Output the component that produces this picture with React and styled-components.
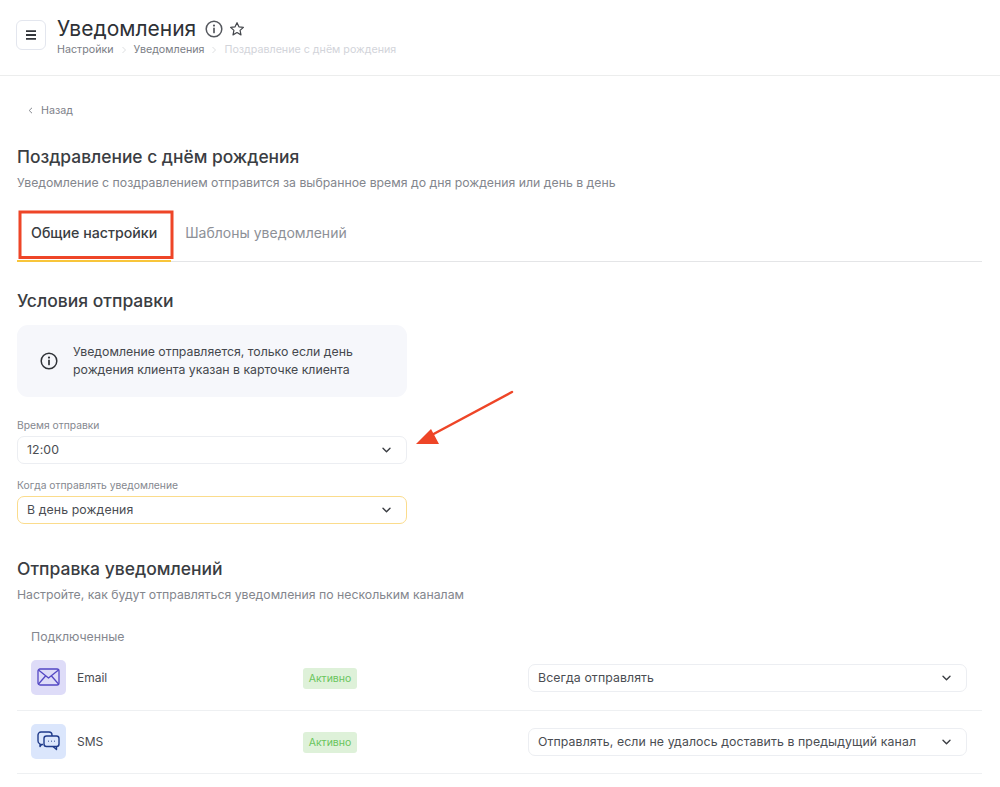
import React from 'react'
import styled, { createGlobalStyle } from 'styled-components'

const GlobalStyle = createGlobalStyle`
    html, body {
        margin: 0;
        padding: 0;
        background: #fff;
        font-family: Inter, "Liberation Sans", sans-serif;
        color: #2f3237;
    }
    body { height: 787px; overflow: hidden; }
    * { box-sizing: border-box; }
`

const Page = styled.div`
    position: relative;
    width: 1000px;
    height: 787px;
    overflow: hidden;
`

const Header = styled.header`
    height: 76px;
    padding: 15px 16px 0;
    display: flex;
    align-items: flex-start;
    gap: 11px;
    border-bottom: 1px solid #eceded;
`

const MenuButton = styled.div`
    width: 30px;
    height: 30px;
    margin-top: 5px;
    border: 1.5px solid #e3e6ee;
    border-radius: 6px;
    display: flex;
    align-items: center;
    justify-content: center;
    color: #33363b;
`

const TitleRow = styled.div`
    display: flex;
    align-items: center;
    gap: 9px;
    height: 28px;
`

const Title = styled.h1`
    margin: 0;
    font-size: 21px;
    line-height: 28px;
    font-weight: 400;
    color: #2e3136;
`

const Star = styled.svg`
    margin-left: -3px;
`

const Crumbs = styled.div`
    display: flex;
    align-items: center;
    gap: 7px;
    height: 14px;
    font-size: 10.7px;
    line-height: 14px;
`

const Crumb = styled.span`
    color: ${p => (p.$muted ? '#d2d4da' : '#7b7e86')};
`

const Content = styled.main`
    padding: 0 18px 0 17px;
`

const Back = styled.div`
    display: flex;
    align-items: center;
    gap: 8px;
    margin: 27px 0 0 11px;
    height: 14px;
    font-size: 10.7px;
    color: #7e8189;
`

const PageHeading = styled.h2`
    margin: 28px 0 0;
    font-size: 17.4px;
    line-height: 24px;
    font-weight: 500;
    color: #3a3d42;
`

const Heading = styled.h3`
    margin: ${p => p.$top}px 0 0;
    font-size: 17.5px;
    line-height: 24px;
    font-weight: 500;
    color: #3a3d42;
`

const Sub = styled.p`
    margin: 6px 0 0;
    font-size: 12.27px;
    line-height: 16px;
    color: #83868d;
`

const Tabs = styled.div`
    display: flex;
    margin-top: 14px;
    height: 57px;
    border-bottom: 1px solid #e4e5e7;
`

const Tab = styled.div`
    height: 57px;
    padding: 0 14px;
    display: flex;
    align-items: center;
    font-size: ${p => (p.$active ? '14.2px' : '14px')};
    font-weight: ${p => (p.$active ? 500 : 400)};
    color: ${p => (p.$active ? '#3a3d42' : '#8d9097')};
    border-bottom: 2px solid ${p => (p.$active ? '#f8c53a' : 'transparent')};
`

const Info = styled.div`
    width: 390px;
    height: 72px;
    margin-top: 12px;
    padding-left: 23px;
    display: flex;
    align-items: center;
    gap: 15px;
    background: #f6f7fb;
    border-radius: 11px;
    font-size: 12.3px;
    line-height: 18px;
    color: #45484d;
`

const Field = styled.div`
    width: 390px;
    margin-top: ${p => p.$top}px;
`

const Label = styled.div`
    height: 14px;
    margin-bottom: 4px;
    font-size: 10.3px;
    line-height: 14px;
    color: #85888f;
`

const Select = styled.div`
    height: 28px;
    padding: 0 15px 1px 9px;
    display: flex;
    align-items: center;
    justify-content: space-between;
    border: 1px solid ${p => (p.$focus ? '#fbdc8c' : '#eceef2')};
    border-radius: 7px;
    font-size: 12.3px;
    letter-spacing: 0.1px;
    color: #4a4d52;
    background: #fff;
`

const ChannelsTitle = styled.div`
    margin: 27px 0 0 14px;
    height: 14px;
    font-size: 12.3px;
    line-height: 14px;
    color: #85888f;
`

const Row = styled.div`
    display: grid;
    grid-template-columns: 272px 225px 439px;
    align-items: center;
    height: ${p => p.$h}px;
    padding: 0 0 ${p => p.$pb || 0}px 14px;
    border-bottom: 1px solid #eef0f2;
    width: 965px;
    > :not(:first-child) {
        margin-top: 2px;
    }
`

const Channel = styled.div`
    display: flex;
    align-items: center;
    gap: 11px;
    font-size: 12px;
    color: #4a4d52;
`

const IconTile = styled.div`
    width: 35px;
    height: 35px;
    border-radius: 5px;
    background: ${p => p.$bg};
    display: flex;
    align-items: center;
    justify-content: center;
`

const Badge = styled.div`
    width: 54px;
    height: 21px;
    border-radius: 3px;
    background: #def1d9;
    color: #69c55c;
    font-size: 10.5px;
    display: flex;
    align-items: center;
    justify-content: center;
`

const Annotations = styled.svg`
    position: absolute;
    inset: 0;
    pointer-events: none;
`

const Chevron = () => (
    <svg width="9" height="6" viewBox="0 0 9 6" fill="none" stroke="#3a3d42" strokeWidth="1.4" strokeLinecap="round" strokeLinejoin="round">
        <path d="M1 1.2l3.5 3.5L8 1.2" />
    </svg>
)

const Sep = () => (
    <svg width="6" height="8" viewBox="0 0 6 8" fill="none" stroke="#d8dade" strokeWidth="0.9">
        <path d="M1.5 1l3 3-3 3" />
    </svg>
)

const InfoIcon = ({ size, color }) => (
    <svg width={size} height={size} viewBox="0 0 18 18" fill="none" stroke={color} strokeWidth="1.5" strokeLinecap="round">
        <circle cx="9" cy="9" r="7.8" />
        <path d="M9 8.4v4" strokeWidth="1.7" />
        <circle cx="9" cy="5.6" r="0.5" strokeWidth="1.2" />
    </svg>
)

export default function App() {
    return (
        <Page>
            <GlobalStyle />
            <Header>
                <MenuButton>
                    <svg width="12" height="10" viewBox="0 0 12 10" stroke="currentColor" strokeWidth="1.8">
                        <path d="M1 1.2h10M1 5h10M1 8.8h10" />
                    </svg>
                </MenuButton>
                <div>
                    <TitleRow>
                        <Title>Уведомления</Title>
                        <InfoIcon size={18} color="#55585e" />
                        <Star width="16" height="16" viewBox="0 0 24 24" fill="none" stroke="#44474c" strokeWidth="1.8" strokeLinejoin="round">
                            <path d="M12 2.5l2.9 6.2 6.7.8-5 4.6 1.4 6.7-6-3.4-6 3.4 1.4-6.7-5-4.6 6.7-.8z" />
                        </Star>
                    </TitleRow>
                    <Crumbs>
                        <Crumb>Настройки</Crumb>
                        <Sep />
                        <Crumb>Уведомления</Crumb>
                        <Sep />
                        <Crumb $muted>Поздравление с днём рождения</Crumb>
                    </Crumbs>
                </div>
            </Header>
            <Content>
                <Back>
                    <svg width="5" height="7" viewBox="0 0 5 7" fill="none" stroke="#85888f" strokeWidth="1">
                        <path d="M4 .8L1.2 3.5 4 6.2" />
                    </svg>
                    Назад
                </Back>
                <PageHeading>Поздравление с днём рождения</PageHeading>
                <Sub>Уведомление с поздравлением отправится за выбранное время до дня рождения или день в день</Sub>
                <Tabs>
                    <Tab $active>Общие настройки</Tab>
                    <Tab>Шаблоны уведомлений</Tab>
                </Tabs>
                <Heading $top={27}>Условия отправки</Heading>
                <Info>
                    <InfoIcon size={18} color="#2f3237" />
                    <div>
                        Уведомление отправляется, только если день<br />
                        рождения клиента указан в карточке клиента
                    </div>
                </Info>
                <Field $top={21}>
                    <Label>Время отправки</Label>
                    <Select>12:00<Chevron /></Select>
                </Field>
                <Field $top={14}>
                    <Label>Когда отправлять уведомление</Label>
                    <Select $focus>В день рождения<Chevron /></Select>
                </Field>
                <Heading $top={33}>Отправка уведомлений</Heading>
                <Sub>Настройте, как будут отправляться уведомления по нескольким каналам</Sub>
                <ChannelsTitle>Подключенные</ChannelsTitle>
                <Row $h={67}>
                    <Channel>
                        <IconTile $bg="#dedcf8">
                            <svg width="23" height="18" viewBox="0 0 23 18" fill="none" stroke="#5347c4" strokeWidth="1.3" strokeLinejoin="round">
                                <rect x="1" y="1" width="21" height="16" rx="2" />
                                <path d="M1.5 2l10 8 10-8M1.5 16l7-8M21.5 16l-7-8" />
                            </svg>
                        </IconTile>
                        Email
                    </Channel>
                    <Badge>Активно</Badge>
                    <Select>Всегда отправлять<Chevron /></Select>
                </Row>
                <Row $h={63} $pb={2}>
                    <Channel>
                        <IconTile $bg="#dbe6fc">
                            <svg width="23" height="20" viewBox="0 0 23 20" fill="none" stroke="#1f3a8a" strokeWidth="1.4" strokeLinejoin="round">
                                <path d="M6 13.5H4.5L3 15.5v-2.6C1.8 12.5 1 11.5 1 10V4a3 3 0 013-3h8a3 3 0 013 3v1" />
                                <rect x="7" y="5" width="15" height="10.5" rx="2.5" />
                                <path d="M16 15.5l3.5 3v-3" />
                                <path d="M11 10.3h.6M14.2 10.3h.6M17.4 10.3h.6" strokeWidth="1.5" />
                            </svg>
                        </IconTile>
                        SMS
                    </Channel>
                    <Badge>Активно</Badge>
                    <Select>Отправлять, если не удалось доставить в предыдущий канал<Chevron /></Select>
                </Row>
            </Content>
            <Annotations width="1000" height="787" viewBox="0 0 1000 787">
                <rect x="20" y="212" width="152" height="45.5" fill="none" stroke="#ee4527" strokeWidth="3" />
                <path d="M512 392L428 437" stroke="#ee4527" strokeWidth="2.5" strokeLinecap="round" />
                <path d="M416 444L431 429L439 444Z" fill="#ee4527" />
            </Annotations>
        </Page>
    )
}
